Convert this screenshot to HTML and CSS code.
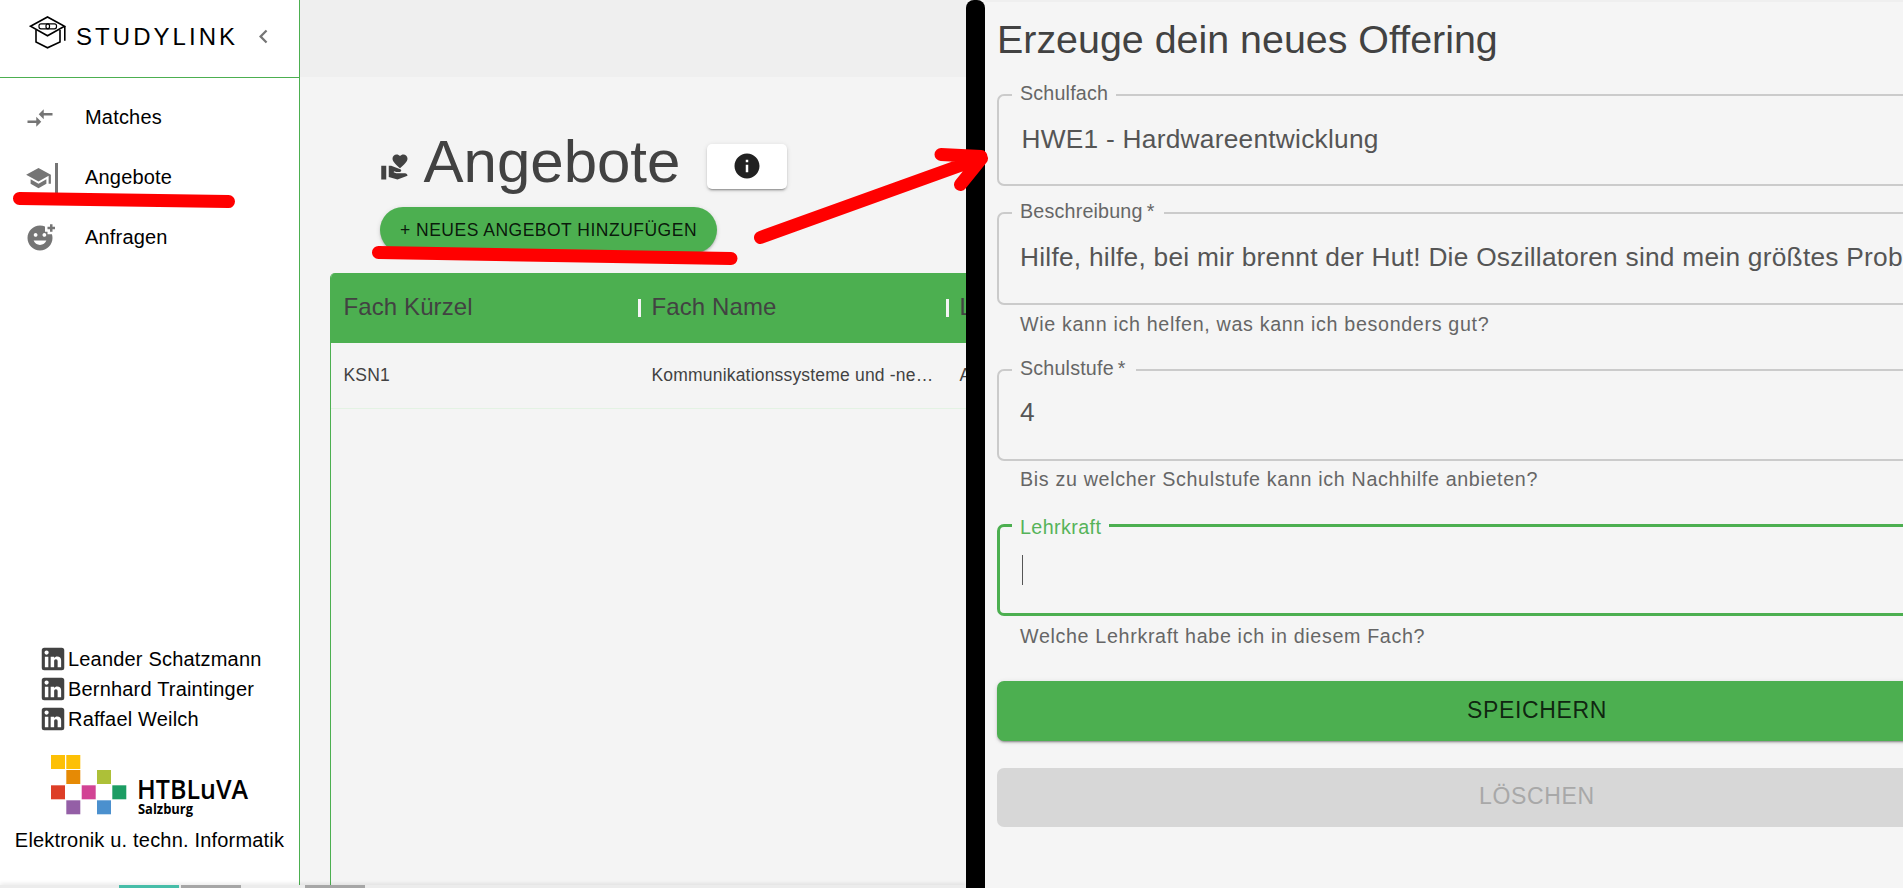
FILE: index.html
```html
<!DOCTYPE html>
<html lang="de">
<head>
<meta charset="utf-8">
<title>StudyLink</title>
<link rel="stylesheet" href="styles.css">
</head>
<body>
<div class="stage">
  <div class="app">
    <div class="columns">
      <aside class="sidebar">
        <header class="brand">
          <svg class="brand-logo" viewBox="0 0 38 35" fill="none" stroke="#000" stroke-width="1.6">
            <path d="M1.500 11.200 18.500 2 35.500 11.200 18.500 20.800Z"/>
            <path d="M7 15v12l11.500 5.800L31 27V15M35.800 11.200v14.500"/>
            <g stroke-width="1.200">
              <rect x="10" y="8.800" width="10.500" height="5" rx="2"/>
              <rect x="17" y="8.800" width="10.500" height="5" rx="2"/>
            </g>
          </svg>
          <span class="brand-name">STUDYLINK</span>
          <svg class="chevron" viewBox="0 0 24 24"><path d="M15.410 7.410 14 6l-6 6 6 6 1.410-1.410L10.830 12z"/></svg>
        </header>
        <nav class="nav">
          <a class="nav-item">
            <svg class="icon" viewBox="0 0 24 24"><path d="M9.010 14H2v2h7.010v3L13 15l-3.990-4v3zm5.980-1v-3H22V8h-7.010V5L11 9l3.990 4z"/></svg>
            <span>Matches</span>
          </a>
          <a class="nav-item active">
            <svg class="icon" viewBox="0 0 24 24"><path d="M5 13.180v4L12 21l7-3.820v-4L12 17l-7-3.820zM12 3 1 9l11 6 9-4.910V17h2V9L12 3z"/></svg>
            <span>Angebote</span>
          </a>
          <a class="nav-item">
            <svg class="icon" viewBox="0 0 24 24"><path d="M18 9V7h-2V2.840C14.770 2.300 13.420 2 11.990 2 6.470 2 2 6.480 2 12s4.470 10 9.990 10C17.520 22 22 17.520 22 12c0-1.050-.170-2.050-.470-3H18zm-2.500-1c.830 0 1.500.670 1.500 1.500s-.670 1.500-1.500 1.500S14 10.330 14 9.500 14.670 8 15.500 8zm-7 0c.830 0 1.500.670 1.500 1.500S9.330 11 8.500 11 7 10.330 7 9.500 7.670 8 8.500 8zm3.500 9.500c-2.330 0-4.310-1.460-5.110-3.500h10.220c-.800 2.040-2.780 3.500-5.110 3.500zM22 3h2v2h-2v2h-2V5h-2V3h2V1h2v2z"/></svg>
            <span>Anfragen</span>
          </a>
        </nav>
        <footer class="credits">
          <ul class="people">
            <li><svg class="icon" viewBox="0 0 24 24"><use href="#linkedin"/></svg>Leander Schatzmann</li>
            <li><svg class="icon" viewBox="0 0 24 24"><use href="#linkedin"/></svg>Bernhard Traintinger</li>
            <li><svg class="icon" viewBox="0 0 24 24"><use href="#linkedin"/></svg>Raffael Weilch</li>
          </ul>
          <svg class="school" viewBox="0 0 200 64">
            <g>
              <path fill="#fdc005" d="M0 0h14v14H0zM15.300 0h14v14h-14z"/>
              <path fill="#e68a05" d="M15.300 15h14v14h-14z"/>
              <path fill="#adc038" d="M46 15h14v14H46z"/>
              <path fill="#dd3e27" d="M0 30.300h14v14H0z"/>
              <path fill="#d24394" d="M30.700 30.300h14v14h-14z"/>
              <path fill="#1c9d63" d="M61.300 30.300h14v14h-14z"/>
              <path fill="#945fa6" d="M15.300 45.300h14v14h-14z"/>
              <path fill="#4b90ce" d="M46 45.300h14v14H46z"/>
            </g>
            <text class="school-name" x="86" y="44" textLength="111" lengthAdjust="spacingAndGlyphs">HTBLuVA</text>
            <text class="school-city" x="87" y="59" textLength="55" lengthAdjust="spacingAndGlyphs">Salzburg</text>
          </svg>
          <p class="department">Elektronik u. techn. Informatik</p>
        </footer>
      </aside>
      <main class="main">
        <div class="topbar"></div>
        <div class="headline">
          <svg class="icon" viewBox="0 0 24 24"><path d="M1 11h4v11H1zM16 3.250C16.650 2.490 17.660 2 18.700 2 20.550 2 22 3.450 22 5.300c0 2.270-2.910 4.900-6 7.700-3.090-2.810-6-5.440-6-7.700C10 3.450 11.450 2 13.300 2c1.040 0 2.050.490 2.700 1.250zM20 17h-7l-2.090-.730.330-.940L13 16h2.820c.650 0 1.180-.530 1.180-1.180 0-.490-.310-.930-.770-1.110L8.970 11H7v9.020L14 22l8.010-3c-.010-1.100-.900-2-2.010-2z"/></svg>
          <h1>Angebote</h1>
          <button class="info"><svg class="icon" viewBox="0 0 24 24"><path d="M12 2C6.480 2 2 6.480 2 12s4.480 10 10 10 10-4.480 10-10S17.520 2 12 2zm1 15h-2v-6h2v6zm0-8h-2V7h2v2z"/></svg></button>
        </div>
        <button class="add">+ NEUES ANGEBOT HINZUFÜGEN</button>
        <div class="table">
          <div class="row head"><span>Fach Kürzel</span><span>Fach Name</span><span>Lehrkraft</span></div>
          <div class="row"><span>KSN1</span><span>Kommunikationssysteme und -netze</span><span>Auer</span></div>
        </div>
      </main>
    </div>
    <div class="dock"><i class="tab on"></i><i class="tab"></i><i class="tab far"></i></div>
  </div>
  <div class="divider"></div>
  <section class="form">
    <h2>Erzeuge dein neues Offering</h2>
    <div class="field subject">
      <fieldset><legend>Schulfach</legend><div class="value">HWE1 - Hardwareentwicklung</div></fieldset>
    </div>
    <div class="field description">
      <fieldset><legend>Beschreibung<span class="star">*</span></legend><div class="value">Hilfe, hilfe, bei mir brennt der Hut! Die Oszillatoren sind mein größtes Problem</div></fieldset>
      <p>Wie kann ich helfen, was kann ich besonders gut?</p>
    </div>
    <div class="field level">
      <fieldset><legend>Schulstufe<span class="star">*</span></legend><div class="value">4</div></fieldset>
      <p>Bis zu welcher Schulstufe kann ich Nachhilfe anbieten?</p>
    </div>
    <div class="field teacher">
      <fieldset><legend>Lehrkraft</legend><div class="caret"></div></fieldset>
      <p>Welche Lehrkraft habe ich in diesem Fach?</p>
    </div>
    <button class="save">SPEICHERN</button>
    <button class="delete" disabled>LÖSCHEN</button>
  </section>
  <svg class="marks" viewBox="0 0 1903 888">
    <path d="M19.500 198.500 228.500 201.500M378.500 252.500 731 258.500M760.500 237.500 981 158M941 154.500l40 2M960.500 184.500l21-26"/>
  </svg>
</div>
<svg class="defs"><symbol id="linkedin" viewBox="0 0 24 24"><path d="M19 3a2 2 0 0 1 2 2v14a2 2 0 0 1-2 2H5a2 2 0 0 1-2-2V5a2 2 0 0 1 2-2h14m-.500 15.500v-5.300a3.260 3.260 0 0 0-3.260-3.260c-.850 0-1.840.520-2.320 1.300v-1.110h-2.790v8.370h2.790v-4.930c0-.770.620-1.400 1.390-1.400a1.400 1.400 0 0 1 1.400 1.400v4.930h2.790M6.880 8.560a1.680 1.680 0 0 0 1.680-1.680c0-.930-.750-1.690-1.680-1.690a1.690 1.690 0 0 0-1.690 1.690c0 .930.760 1.680 1.690 1.680m1.390 9.940v-8.370H5.500v8.370h2.770z"/></symbol></svg>
</body>
</html>
```
FILE: styles.css
```css
* { box-sizing: border-box; }
body, h1, h2, p, ul, fieldset, legend { margin: 0; padding: 0; font-weight: 400; }
body {
  font-family: "Liberation Sans", Arial, sans-serif;
  font-size: 20px;
  color: #000;
  overflow: hidden;
}
button { border: 0; padding: 0; font-family: inherit; }
.defs { display: none; }
.stage { position: relative; display: flex; width: 1903px; height: 888px; overflow: hidden; background: #f5f5f5; }
.icon { width: 30px; height: 30px; flex: none; fill: currentColor; }

.app { width: 966px; flex: none; display: flex; flex-direction: column; overflow: hidden; background: #f4f4f4; }
.columns { display: flex; height: 885px; }

.sidebar { width: 300px; flex: none; display: flex; flex-direction: column; background: #fff; border-right: 1px solid #4caf50; letter-spacing: .188px; }
.brand { height: 78px; display: flex; align-items: flex-start; border-bottom: 1px solid #4caf50; padding-left: 29px; }
.brand-logo { width: 38px; height: 35px; margin-top: 15px; flex: none; }
.brand-name { width: 174px; margin-left: 9px; font-size: 24px; line-height: 28px; margin-top: 23px; letter-spacing: 3.050px; }
.chevron { width: 27px; height: 27px; margin-top: 23px; flex: none; fill: #757575; }
.nav { padding-top: 10px; }
.nav-item { display: flex; align-items: center; height: 60px; padding-left: 25px; color: #000; }
.nav-item .icon { color: #757575; }
.nav-item span { margin-left: 30px; line-height: 22px; padding-bottom: 2px; }
.nav-item.active .icon { width: 33px; padding-right: 3px; border-right: 3px solid #757575; }
.nav-item.active span { margin-left: 27px; }
.credits { margin-top: auto; height: 241px; }
.people { list-style: none; }
.people li { display: flex; align-items: center; height: 30px; padding-left: 37.500px; }
.people .icon { color: #424242; margin-right: .5px; }
.school { display: block; width: 200px; height: 64px; margin: 21px 0 0 51px; }
.school-name { font: 600 26.500px "Open Sans", sans-serif; letter-spacing: 0; }
.school-city { font: 700 13.500px "Open Sans", sans-serif; letter-spacing: 0; }
.department { margin-top: 10px; line-height: 22px; text-align: center; white-space: nowrap; }

.main { flex: 1; min-width: 0; display: flex; flex-direction: column; align-items: flex-start; color: #424242; }
.topbar { align-self: stretch; height: 77px; background: #efefef; flex: none; }
.headline { display: flex; height: 130px; padding-left: 79.500px; }
.headline > .icon { margin-top: 75px; }
.headline h1 { width: 257px; margin: 51px 0 0 14px; font-size: 60px; line-height: 68px; }
.info {
  width: 80px; height: 45px; margin: 67px 0 0 26.500px; border-radius: 5px; background: #fff; color: #212121;
  display: flex; align-items: center; justify-content: center; padding-bottom: 1px;
}
.info, .add, .save { box-shadow: 0 3px 1px -2px rgba(0,0,0,.2), 0 2px 2px rgba(0,0,0,.14), 0 1px 5px rgba(0,0,0,.12); }
.add {
  width: 337px; height: 46px; margin-left: 80px; flex: none; border-radius: 23px; background: #4caf50;
  color: rgba(0,0,0,.87); font-size: 17.500px; line-height: 20px; letter-spacing: .5px;
}
.table { width: 960px; flex: 1; margin: 20px 0 0 30px; border-left: 1px solid #4caf50; border-top-left-radius: 5px; overflow: hidden; }
.row { display: grid; grid-template-columns: 308px 308px 308px; height: 66px; align-items: center; border-bottom: 1px solid #e3f2e3; font-size: 17.500px; letter-spacing: .188px; padding-bottom: 2px; }
.row span { padding: 0 13px 0 12.500px; white-space: nowrap; overflow: hidden; text-overflow: ellipsis; line-height: 28px; }
.row.head { height: 70px; background: #4caf50; border: 0; font-size: 24px; letter-spacing: .1px; }
.row.head span { position: relative; left: 0; background: linear-gradient(#f4f4f4, #f4f4f4) right 0 top 6px / 3px 18px no-repeat; }
.row.head { grid-template-columns: 309.500px 308px 308px; }
.row.head span + span { padding-left: 11px; }
.dock { height: 3px; display: flex; background: #ececec; padding-left: 119px; box-shadow: 0 -1px 4px rgba(0,0,0,.12); }
.tab { width: 60px; height: 3px; margin-right: 2px; background: #a6a6a6; }
.tab.on { background: #47bda8; }
.tab.far { margin-left: 62px; }

.divider { width: 19px; flex: none; background: #000; border-radius: 8px 8px 0 0; }

.form { flex: 1; min-width: 0; display: flex; flex-direction: column; padding-left: 12px; border-top: 2px solid #efefef; overflow: hidden; color: #424242; }
.form h2 { height: 82px; flex: none; padding: 14px 0 0; font-size: 39.400px; line-height: 46px; white-space: nowrap; }
.field { width: 1080px; flex: none; }
.field fieldset { min-width: 0; height: 102px; border: 2px solid #cbcbcb; border-radius: 7px; overflow: hidden; }
.field legend { height: 22px; margin-left: 13px; padding: 0 8px; font-size: 19.700px; line-height: 18px; letter-spacing: .185px; color: #666; white-space: nowrap; }
.star { margin-left: 4px; padding-right: 2px; }
.value { padding-left: 21px; font-size: 26.300px; line-height: 66px; letter-spacing: .247px; color: #555; white-space: nowrap; }
.field p { padding: 6px 0 0 23px; font-size: 19.700px; line-height: 26px; letter-spacing: .656px; color: #666; }
.subject { height: 118px; }
.subject .value { padding-left: 22.500px; }
.description { height: 157px; }
.description fieldset { height: 103px; }
.level { height: 155px; }
.level .value { line-height: 62px; }
.level p { padding-top: 5px; }
.teacher { height: 167px; }
.teacher fieldset { border-color: #4caf50; border-width: 3px; }
.teacher legend { line-height: 26px; letter-spacing: .4px; color: #55b359; margin-left: 12px; }
.teacher p { padding-top: 7px; }
.caret { width: 1px; height: 30px; margin: 19px 0 0 22px; background: #555; }
.save, .delete { width: 1080px; flex: none; font-size: 23px; letter-spacing: .657px; border-radius: 7px; padding-bottom: 2px; }
.save { height: 60px; background: #4caf50; color: rgba(0,0,0,.8); }
.delete { height: 59px; margin-top: 27px; background: #d7d7d7; color: #a8a8a8; }

.marks { position: absolute; left: 0; top: 0; width: 1903px; height: 888px; fill: none; stroke: #f00; stroke-width: 13px; stroke-linecap: round; pointer-events: none; }
```
